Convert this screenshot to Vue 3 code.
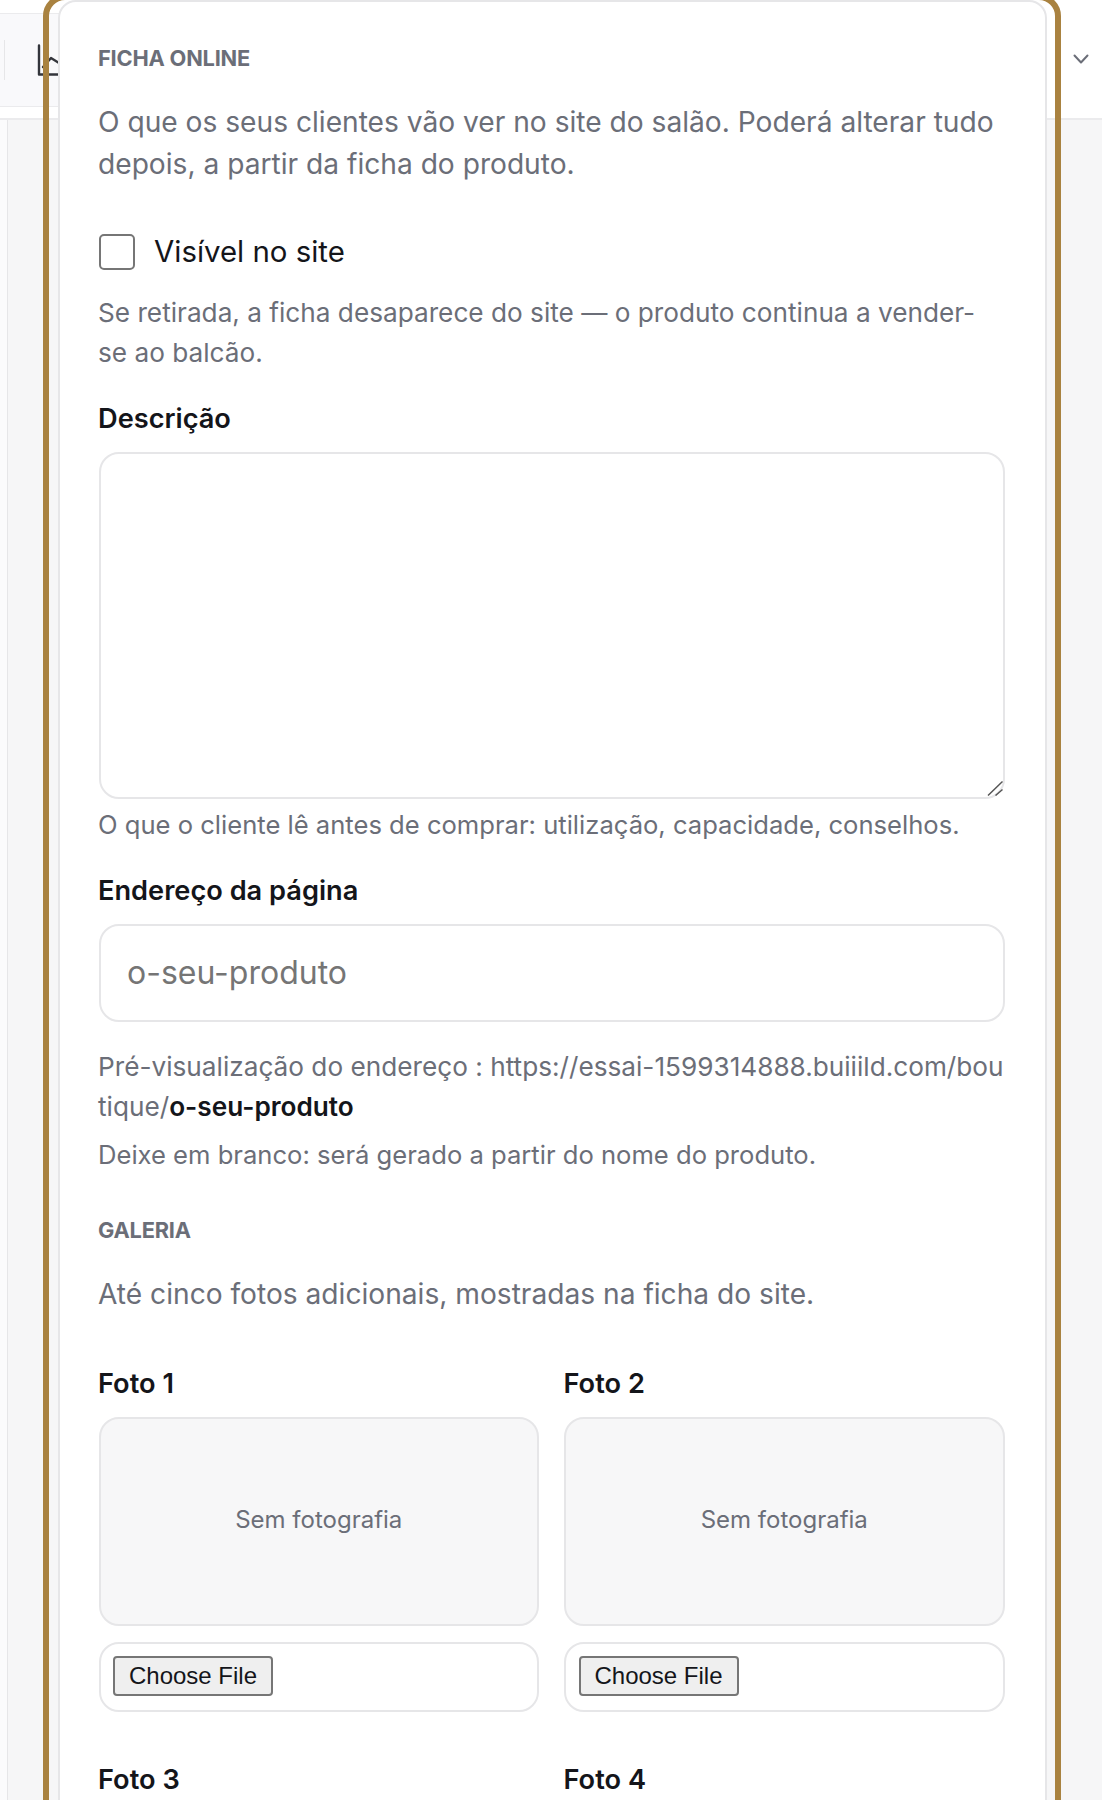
<script setup>
const photos = [
  { label: 'Foto 1' },
  { label: 'Foto 2' },
  { label: 'Foto 3' },
  { label: 'Foto 4' }
]
</script>

<template>
  <div class="page">
    <div class="backdrop">
      <div class="topbar">
        <div class="tb-left">
          <span class="tb-sep"></span>
          <svg class="tb-chart" viewBox="0 0 24 32" fill="none" stroke="#33353b" stroke-width="2.4" stroke-linecap="round" stroke-linejoin="round">
            <path d="M2 1.5v29h20"/>
            <path d="M6 23l8-9 8 5"/>
          </svg>
        </div>
        <svg class="tb-chevron" viewBox="0 0 16 16" fill="none" stroke="#6b6e78" stroke-width="2" stroke-linecap="round" stroke-linejoin="round">
          <path d="M1.5 4.5L8 11.5L14.5 4.5"/>
        </svg>
      </div>
      <div class="under">
        <div class="under-side"></div>
      </div>
    </div>

    <div class="ring">
      <form class="card" @submit.prevent>
        <h3 class="kicker">FICHA ONLINE</h3>
        <p class="lead">O que os seus clientes vão ver no site do salão. Poderá alterar tudo depois, a partir da ficha do produto.</p>

        <label class="check">
          <span class="box"></span>
          <span>Visível no site</span>
        </label>
        <p class="help help-check">Se retirada, a ficha desaparece do site — o produto continua a vender-se ao balcão.</p>

        <label class="field-label lbl-desc">Descrição</label>
        <div class="area-wrap">
          <textarea class="area"></textarea>
          <svg class="grip" viewBox="0 0 16 16" fill="none" stroke="#555" stroke-width="1.5">
            <path d="M1 15.5L15.5 1.5"/>
            <path d="M8.5 15.5L15.5 9.5"/>
          </svg>
        </div>
        <p class="help help-desc">O que o cliente lê antes de comprar: utilização, capacidade, conselhos.</p>

        <label class="field-label lbl-addr">Endereço da página</label>
        <input class="text" placeholder="o-seu-produto" />
        <p class="help preview">Pré-visualização do endereço : https://essai-1599314888.buiiild.com/boutique/<b>o-seu-produto</b></p>
        <p class="help help-blank">Deixe em branco: será gerado a partir do nome do produto.</p>

        <h3 class="kicker kicker-gallery">GALERIA</h3>
        <p class="lead lead-gallery">Até cinco fotos adicionais, mostradas na ficha do site.</p>

        <div class="grid">
          <div v-for="p in photos" :key="p.label" class="photo">
            <div class="photo-label">{{ p.label }}</div>
            <div class="thumb">Sem fotografia</div>
            <div class="file"><button type="button" class="file-btn">Choose File</button></div>
          </div>
        </div>
      </form>
    </div>
  </div>
</template>

<style>
html, body { margin: 0; padding: 0; }
</style>

<style scoped>
.page {
  position: relative;
  width: 1102px;
  height: 1800px;
  overflow: hidden;
  background: #f6f6f7;
  font-family: Inter, "Liberation Sans", sans-serif;
}
.backdrop { display: flex; flex-direction: column; height: 100%; }
.topbar {
  height: 120px;
  flex: none;
  box-sizing: border-box;
  background: #fff;
  border-bottom: 2px solid #ebebed;
  display: flex;
  align-items: center;
  justify-content: space-between;
}
.tb-left {
  align-self: flex-start;
  margin-top: 13px;
  width: 500px;
  height: 94px;
  box-sizing: border-box;
  background: #f9f9fb;
  border-top: 1px solid #ebebed;
  border-bottom: 1px solid #ebebed;
  display: flex;
  align-items: center;
  gap: 32px;
}
.tb-sep { width: 1px; height: 40px; background: #e6e6e8; margin-left: 4px; }
.tb-chart { width: 24px; height: 32px; margin-top: -1px; }
.tb-chevron { width: 16px; height: 16px; margin-right: 13px; }
.under { flex: 1; display: flex; }
.under-side { width: 7px; border-right: 1px solid #e6e6e8; background: #fbfbfc; }

.ring {
  position: absolute;
  top: -6px;
  left: 43px;
  width: 1018px;
  height: 1840px;
  box-sizing: border-box;
  border: 6px solid #a98240;
  border-radius: 22px;
  padding: 0 8px 0 9px;
}
.card {
  box-sizing: border-box;
  height: 100%;
  background: #fff;
  border: 2px solid #e6e6e8;
  border-radius: 18px;
  padding: 42px 40px 0 38px;
  color: #6b6e78;
}
.kicker {
  margin: 0;
  font-size: 21.8px;
  line-height: 28px;
  font-weight: 700;
  letter-spacing: -0.2px;
  color: #6b6e78;
}
.lead {
  margin: 29px 0 0;
  font-size: 28.15px;
  line-height: 42px;
}
.check {
  display: flex;
  align-items: center;
  gap: 19px;
  margin-top: 49px;
  font-size: 29.4px;
  line-height: 36px;
  color: #14151a;
}
.box {
  width: 36px;
  height: 36px;
  margin-left: 1px;
  box-sizing: border-box;
  border: 2px solid #767676;
  border-radius: 5px;
  background: #fff;
}
.help { margin: 0; font-size: 25.6px; line-height: 40px; }
.help-check { margin-top: 23px; padding-right: 12px; font-size: 26.2px; }
.field-label { display: block; font-size: 27.2px; line-height: 36px; font-weight: 600; color: #14151a; }
.lbl-desc { margin-top: 28px; }
.area-wrap { position: relative; margin: 15px 0 0 1px; }
.area {
  display: block;
  width: 100%;
  height: 347px;
  box-sizing: border-box;
  margin: 0;
  background: #fff;
  border: 2px solid #e6e6e8;
  border-radius: 20px;
  outline: none;
  resize: none;
}
.grip {
  position: absolute;
  right: 2px;
  bottom: 3px;
  width: 16px;
  height: 16px;
}
.help-desc { margin-top: 6px; }
.lbl-addr { margin-top: 28px; }
.text {
  display: block;
  width: calc(100% - 1px);
  height: 98px;
  box-sizing: border-box;
  margin: 15px 0 0 1px;
  padding: 0 26px 2px;
  border: 2px solid #e6e6e8;
  border-radius: 20px;
  font: 400 32px Inter, "Liberation Sans", sans-serif;
  outline: none;
}
.text::placeholder { color: #757575; opacity: 1; }
.preview { margin-top: 25px; word-break: break-all; font-size: 26.2px; }
.preview b { font-weight: 600; color: #14151a; }
.help-blank { margin-top: 8px; }
.kicker-gallery { margin-top: 41px; }
.lead-gallery { margin-top: 29px; }
.grid {
  display: grid;
  grid-template-columns: 1fr 1fr;
  column-gap: 24px;
  row-gap: 50px;
  margin-top: 51px;
}
.photo-label { font-size: 27.2px; line-height: 36px; font-weight: 600; color: #14151a; }
.thumb {
  box-sizing: border-box;
  height: 209px;
  margin-top: 15px;
  padding-bottom: 5px;
  display: flex;
  align-items: center;
  justify-content: center;
  background: #f7f7f8;
  border: 2px solid #e6e6e8;
  border-radius: 20px;
  font-size: 24px;
}
.file {
  box-sizing: border-box;
  height: 70px;
  margin-top: 16px;
  padding: 0 14px 2px 13px;
  display: flex;
  align-items: center;
  background: #fff;
  border: 2px solid #e6e6e8;
  border-radius: 20px;
}
.photo:nth-child(odd) .thumb,
.photo:nth-child(odd) .file { margin-left: 1px; margin-right: 1px; }
.photo:nth-child(odd) .file { padding-left: 12px; }
.file-btn {
  box-sizing: border-box;
  width: 160px;
  height: 40px;
  padding: 0;
  background: #efefef;
  border: 2px solid #767676;
  border-radius: 4px;
  color: #14151a;
  font: 400 24px "Liberation Sans", Arial, sans-serif;
}
</style>
